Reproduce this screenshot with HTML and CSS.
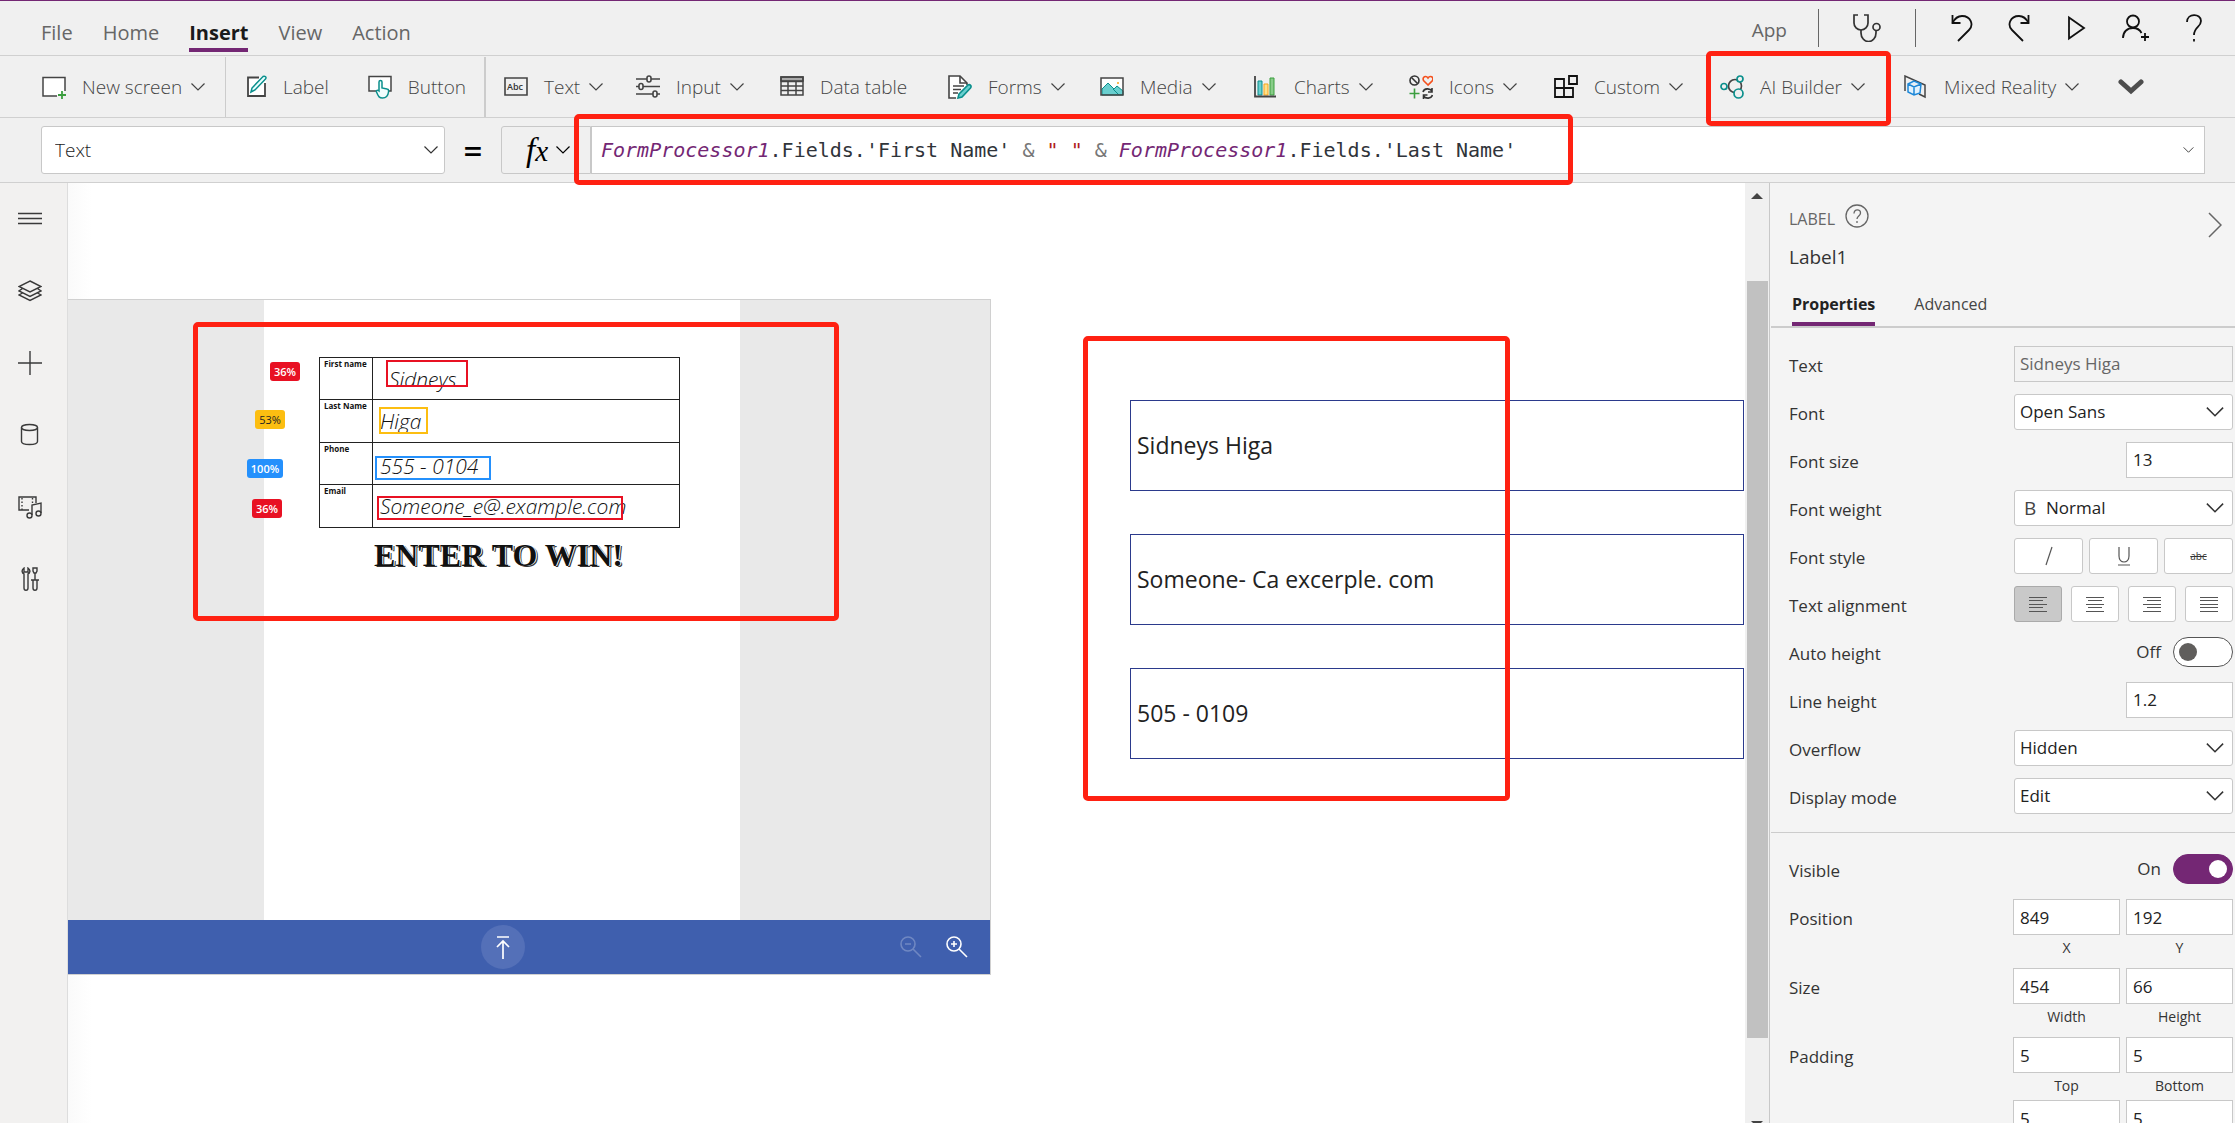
FILE: index.html
```html
<!DOCTYPE html>
<html lang="en">
<head>
<meta charset="utf-8">
<title>Power Apps Studio</title>
<link rel="stylesheet" href="styles.css">
</head>
<body>
<svg class="defs" aria-hidden="true">
  <symbol id="down" viewBox="0 0 14 8"><path d="M.5.5 7 7 13.5.5" fill="none" stroke="currentColor" stroke-width="1.2"/></symbol>
</svg>
<div class="app">
  <header class="menubar">
    <nav class="menus">
      <a href="#">File</a>
      <a href="#">Home</a>
      <a href="#" class="current">Insert</a>
      <a href="#">View</a>
      <a href="#">Action</a>
    </nav>
    <div class="actions">
      <a href="#" class="app-link">App</a>
      <button class="checker" aria-label="App checker"><svg width="30" height="28" viewBox="0 0 30 28" fill="none" stroke="#333" stroke-width="1.7"><path d="M6 1H2v8a7 7 0 0 0 14 0V1h-4"/><path d="M9 16v3a7 8 0 0 0 15 0v-3"/><circle cx="24.500" cy="13" r="3.500"/></svg></button>
      <button aria-label="Undo"><svg width="22" height="28" viewBox="0 0 22 28" fill="none" stroke="#111" stroke-width="1.800"><path d="M1.500 1v8h8"/><path d="M1.500 9C4 4 7 2 11 2c9 0 12 9 7 14L7 27"/></svg></button>
      <button aria-label="Redo"><svg width="22" height="28" viewBox="0 0 22 28" fill="none" stroke="#111" stroke-width="1.800"><path d="M20.500 1v8h-8"/><path d="M20.500 9C18 4 15 2 11 2 2 2-1 11 4 16l11 11"/></svg></button>
      <button aria-label="Preview the app"><svg width="22" height="28" viewBox="0 0 22 28" fill="none" stroke="#111" stroke-width="1.800"><path d="M4 3.500v21L19 14z"/></svg></button>
      <button aria-label="Share"><svg width="28" height="28" viewBox="0 0 28 28" fill="none" stroke="#111" stroke-width="1.800"><circle cx="11" cy="7.500" r="6"/><path d="M1 24c0-6 4-10 10-10 4 0 7 2 8.500 5M23 19v8M19 23h8"/></svg></button>
      <button aria-label="Help"><svg width="18" height="28" viewBox="0 0 18 28" fill="none" stroke="#111" stroke-width="1.800"><path d="M2 8c0-9 14-9 14-1 0 6-7 6-7 14M9 25v2.500"/></svg></button>
    </div>
  </header>

  <div class="toolbar">
    <div class="group screen">
      <button class="tool"><svg width="24" height="24" viewBox="0 0 24 24"><path d="M15 21H1V2.500h22V16" fill="#fff" stroke="#444" stroke-width="1.500"/><path d="M20 16v8M16 20h8" stroke="#3b9e3f" stroke-width="1.800"/></svg><span>New screen</span><svg class="chev"><use href="#down"/></svg></button>
    </div>
    <div class="group basic">
      <button class="tool"><svg width="20" height="24" viewBox="0 0 20 24"><path d="M1 2.500h18V21H1z" fill="#fff"/><path d="M12 2.500H1V21h17V8" fill="none" stroke="#444" stroke-width="1.800"/><path d="M4 17l1-4L16 1.500c2-1 4 1 2.500 2.500L8 15z" fill="#e8ffff" stroke="#0a8f8c" stroke-width="1.500"/></svg><span>Label</span></button>
      <button class="tool"><svg width="24" height="24" viewBox="0 0 24 24"><path d="M1 1.500h22V16H1z" fill="#fff" stroke="#444" stroke-width="1.500"/><path d="M11 16V7c0-2 3-2 3 0v6l5 1c1 0 2 1 1.500 3-.5 4-2 6-6 6-3 0-4-1-6-6-.5-2 1-2 2.500-1z" fill="#f0fdfd" stroke="#0a8f8c" stroke-width="1.500"/></svg><span>Button</span></button>
    </div>
    <div class="group wide">
      <button class="tool"><svg width="24" height="24" viewBox="0 0 24 24"><path d="M1 3h22v17H1z" fill="none" stroke="#444" stroke-width="1.600"/><text x="3" y="15" class="abc">Abc</text></svg><span>Text</span><svg class="chev"><use href="#down"/></svg></button>
      <button class="tool"><svg width="24" height="24" viewBox="0 0 24 24" stroke="#444" stroke-width="1.600" fill="#f0f0f0"><path d="M0 4h24M0 11.500h24M0 19h24"/><rect x="11" y="1" width="4" height="6" rx="2"/><rect x="3" y="8.500" width="4" height="6" rx="2"/><rect x="17" y="16" width="4" height="6" rx="2"/></svg><span>Input</span><svg class="chev"><use href="#down"/></svg></button>
      <button class="tool"><svg width="24" height="24" viewBox="0 0 24 24" fill="none" stroke="#444" stroke-width="1.500"><path d="M1 2h22v4H1z" fill="#aaa"/><path d="M1 2h22v18H1zM1 6.500h22M1 11h22M1 15.500h22M8 7v13M16 7v13"/></svg><span>Data table</span></button>
      <button class="tool"><svg width="24" height="24" viewBox="0 0 24 24" fill="none" stroke="#444" stroke-width="1.600"><path d="M8 23H1V1h11l7 7v2" fill="#fff"/><path d="M12 1v7h7M5 11h11M5 14.500h8M5 18h5"/><path d="M11 19 20 10c2-1 4 1 2.500 3L14 22l-4 1z" fill="#69cfcf" stroke="#0a8f8c"/></svg><span>Forms</span><svg class="chev"><use href="#down"/></svg></button>
      <button class="tool"><svg width="24" height="24" viewBox="0 0 24 24"><path d="M1 3h22v17H1z" fill="#fff"/><path d="M2 14 8 8l6 6 3-3 6 5v4H2z" fill="#69cfcf" stroke="#0a8f8c"/><path d="m13 14 6 6" stroke="#0a8f8c"/><circle cx="18" cy="8" r="1" fill="#f8a51b"/><path d="M1 3h22v17H1z" fill="none" stroke="#444" stroke-width="1.500"/></svg><span>Media</span><svg class="chev"><use href="#down"/></svg></button>
      <button class="tool"><svg width="24" height="24" viewBox="0 0 24 24"><path d="M4 6h4v14H4z" fill="#69cfcf" stroke="#0a8f8c"/><path d="M10 9h4v11h-4z" fill="#fde08a" stroke="#f8a51b"/><path d="M16 3h4v17h-4z" fill="#88cc88" stroke="#3b9e3f"/><path d="M1 1v20.500h21" fill="none" stroke="#444" stroke-width="1.800"/></svg><span>Charts</span><svg class="chev"><use href="#down"/></svg></button>
      <button class="tool"><svg width="24" height="24" viewBox="0 0 24 24" fill="none" stroke-width="1.600"><circle cx="5.500" cy="5.500" r="4.500" stroke="#333"/><path d="m2.500 2.500 6 6" stroke="#333"/><path d="M19 10 14.500 5.500C13 2 17 0 19 3c2-3 6-1 4.500 2.500z" stroke="#f4511e"/><path d="M5.500 13.500v10M.5 18.500h10" stroke="#3b9e3f"/><path d="M14 17c1-4 7-4 9-1M23 13v4h-4M23.500 20c-1 4-7 4-9 1M14.500 24v-4h4" stroke="#333"/></svg><span>Icons</span><svg class="chev"><use href="#down"/></svg></button>
      <button class="tool"><svg width="24" height="24" viewBox="0 0 24 24" fill="none" stroke="#111" stroke-width="1.800"><path d="M1 4h9v18H1zM1 13h18v9H1zM15 1h8v8h-8z"/></svg><span>Custom</span><svg class="chev"><use href="#down"/></svg></button>
      <button class="tool marked"><svg width="24" height="24" viewBox="0 0 24 24" fill="#f0f0f0" stroke-width="1.700" stroke="#0a8f8c"><circle cx="15" cy="11" r="6.500" stroke="#444"/><circle cx="4" cy="11.500" r="3"/><circle cx="20" cy="4" r="3"/><circle cx="18.500" cy="18.500" r="4.500"/></svg><span>AI Builder</span><svg class="chev"><use href="#down"/></svg></button>
      <button class="tool"><svg width="24" height="24" viewBox="0 0 24 24" fill="none" stroke-width="1.500"><path d="M1 16V1l20 9v12l-6-3" stroke="#444"/><path d="M4 9l6-3 7 3-1 9-6 2-6-3zM4 9l6 3 7-3M10 12v8" fill="#e3f2fd" stroke="#1e88d8"/></svg><span>Mixed Reality</span><svg class="chev"><use href="#down"/></svg></button>
      <button class="tool" aria-label="More controls"><svg width="26" height="24" viewBox="0 0 26 24"><path d="m3 7 10 9L23 7" fill="none" stroke="#4d4d4d" stroke-width="5" stroke-linecap="round"/></svg></button>
    </div>
  </div>

  <div class="formula-row">
    <div class="picker property"><select aria-label="Property"><option>Text</option></select><svg class="chev"><use href="#down"/></svg></div>
    <span class="equals">=</span>
    <button class="fx" aria-label="Functions"><i><b>f</b>x</i><svg class="chev"><use href="#down"/></svg></button>
    <div class="formula">
      <div class="code" role="textbox" contenteditable="true" aria-label="Formula" spellcheck="false"><i>FormProcessor1</i>.Fields.'First Name' <u>&amp;</u> <s>" "</s> <u>&amp;</u> <i>FormProcessor1</i>.Fields.'Last Name'</div>
      <svg class="chev"><use href="#down"/></svg>
    </div>
  </div>

  <main class="workspace">
    <nav class="rail">
      <button aria-label="Menu"><svg width="24" height="24" viewBox="0 0 24 24"><path d="M0 6.500h24M0 11.500h24M0 16.500h24"/></svg></button>
      <button aria-label="Tree view"><svg width="24" height="24" viewBox="0 0 24 24"><path d="M12 2 23 7.500 12 13 1 7.500zM4.500 9.500 1 12l11 5.500L23 12l-3.500-2.500M4.500 14 1 16l11 5.500L23 16l-3.500-2"/></svg></button>
      <button aria-label="Insert"><svg width="24" height="24" viewBox="0 0 24 24"><path d="M12 0v24M0 12h24"/></svg></button>
      <button aria-label="Data"><svg width="24" height="24" viewBox="0 0 24 24"><ellipse cx="11.500" cy="4.500" rx="8" ry="3"/><path d="M3.500 4.500v14c0 4 16 4 16 0v-14"/></svg></button>
      <button aria-label="Media"><svg width="24" height="24" viewBox="0 0 24 24"><path d="M11 15H1V2h17v6M14 20V10l9-2v10"/><path d="M4 3v12M14.500 3v6" stroke-dasharray="1.500 2"/><circle cx="11.500" cy="20.500" r="2.500"/><circle cx="20.500" cy="18.500" r="2.500"/></svg></button>
      <button aria-label="Advanced tools"><svg width="24" height="24" viewBox="0 0 24 24"><path d="M6 1C3 3 4 6 6 7v14c0 3 4 3 4 0V7c2-1 3-4 0-6v4H6zM15 1h4v3l-1 2h-2l-1-2zM17 6v7M13 13h8M15 13v8c0 3 4 3 4 0v-8"/></svg></button>
    </nav>

    <section class="canvas">
      <div class="processor">
        <div class="page">
          <table class="form">
            <tr><th scope="row">First name</th><td class="ink">Sidneys</td></tr>
            <tr><th scope="row">Last Name</th><td class="ink">Higa</td></tr>
            <tr><th scope="row">Phone</th><td class="ink">555 - 0104</td></tr>
            <tr><th scope="row">Email</th><td class="ink">Someone_e@.example.com</td></tr>
          </table>
          <div class="slogan">ENTER TO WIN!</div>
          <span class="hit low first"></span>
          <span class="hit mid last"></span>
          <span class="hit high phone"></span>
          <span class="hit low email"></span>
          <span class="score low first">36%</span>
          <span class="score mid last">53%</span>
          <span class="score high phone">100%</span>
          <span class="score low email">36%</span>
        </div>
        <div class="viewbar">
          <button class="fit" aria-label="Upload"><svg width="14" height="24" viewBox="0 0 14 24" fill="none" stroke="#fff" stroke-width="1.700"><path d="M1 2h12M7 6v18M1 12l6-6 6 6"/></svg></button>
          <button class="zoom" disabled aria-label="Zoom out"><svg width="22" height="22" viewBox="0 0 22 22"><circle cx="8" cy="8" r="7"/><path d="M5 8h6M13 13l8 8"/></svg></button>
          <button class="zoom" aria-label="Zoom in"><svg width="22" height="22" viewBox="0 0 22 22"><circle cx="8" cy="8" r="7"/><path d="M5 8h6M8 5v6M13 13l8 8"/></svg></button>
        </div>
      </div>
      <div class="outputs">
        <div class="output">Sidneys Higa</div>
        <div class="output">Someone- Ca excerple. com</div>
        <div class="output">505 - 0109</div>
      </div>
      <div class="mark scan"></div>
      <div class="mark results"></div>
    </section>

    <div class="scroll" aria-hidden="true">
      <svg width="12" height="6" viewBox="0 0 12 6"><path d="M0 6 6 0l6 6z" fill="#444"/></svg>
      <div class="thumb"></div>
      <svg class="end" width="12" height="6" viewBox="0 0 12 6"><path d="M0 0h12L6 6z" fill="#444"/></svg>
    </div>

    <aside class="panel">
      <div class="heading">
        <div>
          <div class="kind">LABEL <button aria-label="About labels"><svg width="24" height="24" viewBox="0 0 24 24" fill="none" stroke="#666" stroke-width="1.300"><circle cx="12" cy="12" r="11"/><path d="M9 9.500c0-5 6.500-4.500 6.500-.5 0 3-3.500 3-3.500 6M12 17v2"/></svg></button></div>
          <div class="name">Label1</div>
        </div>
        <button aria-label="Collapse"><svg width="14" height="26" viewBox="0 0 14 26" fill="none" stroke="#666" stroke-width="1.500"><path d="M1 1l12 12L1 25"/></svg></button>
      </div>
      <div class="tabs" role="tablist">
        <button role="tab" aria-selected="true">Properties</button>
        <button role="tab" aria-selected="false">Advanced</button>
      </div>
      <div class="props">
        <div class="row"><label for="p-text">Text</label><input id="p-text" class="full" value="Sidneys Higa" disabled></div>
        <div class="row"><label for="p-font">Font</label><div class="picker"><select id="p-font"><option>Open Sans</option></select><svg class="chev"><use href="#down"/></svg></div></div>
        <div class="row"><label for="p-size">Font size</label><input id="p-size" value="13"></div>
        <div class="row"><label for="p-weight">Font weight</label><div class="picker"><span class="bold">B</span><select id="p-weight"><option>Normal</option></select><svg class="chev"><use href="#down"/></svg></div></div>
        <div class="row"><span>Font style</span><div class="buttons three">
          <button aria-label="Italic"><svg width="20" height="20" viewBox="0 0 20 20"><path d="m7 19 6-18"/></svg></button>
          <button aria-label="Underline"><svg width="20" height="20" viewBox="0 0 20 20"><path d="M5 1v9c0 8 10 8 10 0V1M4 19h12"/></svg></button>
          <button aria-label="Strikethrough" class="strike">abc</button></div></div>
        <div class="row"><span>Text alignment</span><div class="buttons four">
          <button aria-label="Left" class="on"><svg width="20" height="20" viewBox="0 0 20 20"><path d="M1 3.500h18M1 6.500h14M1 10.500h18M1 13.500h14M1 17.500h18"/></svg></button>
          <button aria-label="Center"><svg width="20" height="20" viewBox="0 0 20 20"><path d="M1 3.500h18M3 6.500h14M1 10.500h18M3 13.500h14M1 17.500h18"/></svg></button>
          <button aria-label="Right"><svg width="20" height="20" viewBox="0 0 20 20"><path d="M1 3.500h18M5 6.500h14M1 10.500h18M5 13.500h14M1 17.500h18"/></svg></button>
          <button aria-label="Justify"><svg width="20" height="20" viewBox="0 0 20 20"><path d="M1 3.500h18M1 6.500h18M1 10.500h18M1 13.500h18M1 17.500h18"/></svg></button></div></div>
        <div class="row"><label for="p-auto">Auto height</label><div class="toggle"><span>Off</span><input type="checkbox" id="p-auto"></div></div>
        <div class="row"><label for="p-line">Line height</label><input id="p-line" value="1.2"></div>
        <div class="row"><label for="p-over">Overflow</label><div class="picker"><select id="p-over"><option>Hidden</option></select><svg class="chev"><use href="#down"/></svg></div></div>
        <div class="row"><label for="p-mode">Display mode</label><div class="picker"><select id="p-mode"><option>Edit</option></select><svg class="chev"><use href="#down"/></svg></div></div>
      </div>
      <div class="props layout">
        <div class="row"><label for="p-vis">Visible</label><div class="toggle"><span>On</span><input type="checkbox" id="p-vis" checked></div></div>
        <div class="row pair"><span>Position</span><div><input id="p-x" value="849"><label for="p-x">X</label></div><div><input id="p-y" value="192"><label for="p-y">Y</label></div></div>
        <div class="row pair"><span>Size</span><div><input id="p-w" value="454"><label for="p-w">Width</label></div><div><input id="p-h" value="66"><label for="p-h">Height</label></div></div>
        <div class="row pair tight"><span>Padding</span><div><input id="p-t" value="5"><label for="p-t">Top</label></div><div><input id="p-b" value="5"><label for="p-b">Bottom</label></div></div>
        <div class="row pair"><span></span><div><input aria-label="Left" value="5"></div><div><input aria-label="Right" value="5"></div></div>
      </div>
    </aside>
  </main>
</div>
</body>
</html>
```

FILE: styles.css
```css
*, *::before, *::after { box-sizing: border-box; }

body {
  margin: 0;
  font-family: "Open Sans", "Noto Sans", sans-serif;
  font-size: 17px;
  color: #333;
}

button, input, select { font: inherit; color: inherit; }
button { border: 0; padding: 0; background: none; display: flex; align-items: center; justify-content: center; }
a { color: inherit; text-decoration: none; }
svg { display: block; flex: none; }
.defs { position: absolute; width: 0; height: 0; }
.chev { width: 14px; height: 8px; }

.app {
  height: 100vh;
  display: flex;
  flex-direction: column;
  overflow: hidden;
  background: #f0f0f0;
}

/* menu bar */
.menubar {
  height: 56px;
  flex: none;
  display: flex;
  justify-content: space-between;
  border-top: 1px solid #742774;
  border-bottom: 1px solid #d0d0d0;
  padding: 0 32px 0 41px;
}
.menus { display: flex; gap: 30px; font-size: 20px; color: #666; padding-top: 18px; }
.menus a { height: 33px; line-height: 28px; }
.menus .current { font-weight: 700; color: #1a1a1a; border-bottom: 4px solid #742774; }
.actions { display: flex; align-items: flex-start; gap: 35px; padding-top: 8px; }
.actions button { height: 38px; }
.app-link { font-size: 19px; color: #666; line-height: 42px; margin-right: -4px; }
.checker { padding: 0 33px; border: solid #666; border-width: 0 1px; }

/* insert toolbar */
.toolbar {
  height: 62px;
  flex: none;
  display: flex;
  padding-top: 1px;
  border-bottom: 1px solid #d0d0d0;
}
.group { display: flex; align-items: center; }
.group.screen { width: 226px; padding-left: 42px; border-right: 1px solid #ccc; }
.group.basic { width: 260px; padding-left: 21px; gap: 39px; border-right: 2px solid #ccc; }
.group.wide {
  flex: 1;
  padding-left: 18px;
  display: grid;
  grid-template-columns: 132px 144px 168px 152px 154px 155px 145px 166px 184px 214px auto;
  justify-content: start;
}
.tool { height: 50px; justify-content: flex-start; gap: 16px; font-size: 19px; font-weight: 300; color: #444; white-space: nowrap; position: relative; }
.tool .chev { margin-left: -7px; }
.abc { font-size: 9px; font-weight: 600; fill: #333; }
.marked::after {
  content: "";
  position: absolute;
  inset: -11px 13px -14px -14px;
  border: 5px solid #ff2112;
  border-radius: 5px;
}

/* formula bar */
.formula-row {
  height: 65px;
  flex: none;
  display: flex;
  align-items: center;
  padding: 0 30px 0 41px;
  border-bottom: 1px solid #d0d0d0;
}
.picker {
  display: flex;
  align-items: center;
  height: 36px;
  width: 219px;
  padding: 0 8px 0 5px;
  border: 1px solid #c8c8c8;
  border-radius: 3px;
  background: #fff;
}
.picker select { flex: 1; min-width: 0; appearance: none; border: 0; background: none; padding: 0; color: #222; }
.picker .chev { width: 18px; height: 10px; }
.picker.property { width: 404px; height: 48px; padding: 0 6px 0 13px; }
.property select { font-size: 19px; font-weight: 300; }
.property .chev { width: 14px; height: 8px; }
.equals { width: 56px; text-align: center; font-size: 33px; font-weight: 600; color: #000; }
.fx { width: 90px; height: 48px; gap: 8px; border: 1px solid #c8c8c8; border-radius: 3px 0 0 3px; padding-left: 4px; font-family: "Liberation Serif", serif; font-size: 29px; color: #000; }
.fx b { font-weight: 400; font-size: 33px; }
.formula {
  flex: 1;
  height: 48px;
  display: flex;
  align-items: center;
  justify-content: space-between;
  padding: 0 10px 0 9px;
  border: 1px solid #c8c8c8;
  background: #fff;
  position: relative;
}
.formula::after {
  content: "";
  position: absolute;
  left: -18px;
  top: -13px;
  width: 999px;
  height: 71px;
  border: 5px solid #ff2112;
  border-radius: 5px;
  pointer-events: none;
  z-index: 1;
}
.formula .chev { width: 11px; height: 6px; }
.code { font-family: "DejaVu Sans Mono", monospace; font-size: 20px; color: #30343a; white-space: pre; }
.code i { color: #742774; }
.code u { color: #777; text-decoration: none; }
.code s { color: #b02020; text-decoration: none; }

/* work area */
.workspace { flex: 1; min-height: 0; display: flex; }
.rail {
  width: 68px;
  flex: none;
  background: #f2f1f0;
  border-right: 1px solid #ddd;
  padding: 24px 0 0 18px;
  display: flex;
  flex-direction: column;
  gap: 48px;
}
.rail button { width: 24px; height: 24px; }
.rail svg { fill: none; stroke: #3a3a3a; stroke-width: 1.4; }

.canvas { flex: 1; position: relative; overflow: hidden; background: linear-gradient(90deg, #fafafa, #fff 24px); }
.processor {
  position: absolute;
  left: 0;
  top: 116px;
  width: 923px;
  border: 1px solid #d0d0d0;
  border-left: 0;
  background: #e9e9e9;
}
.page { width: 476px; height: 620px; margin-left: 196px; padding: 57px 0 0 55px; background: #fff; position: relative; }
.form { border-collapse: collapse; width: 361px; table-layout: fixed; }
.form tr { height: 42px; }
.form tr:nth-child(even) { height: 43px; }
.form th, .form td { border: 1px solid #222; }
.form th { width: 53px; padding: 2px 0 0 4px; vertical-align: top; text-align: left; font-size: 8px; line-height: 8px; font-weight: 700; color: #111; white-space: nowrap; }
.ink { padding: 0 0 0 7px; font-style: italic; font-weight: 300; font-size: 21px; line-height: 24px; color: #111; }
tr:first-child .ink { padding-left: 16px; }
.form tr:nth-child(3) .ink { padding-top: 5px; }
.slogan {
  padding: 7px 0 0 55px;
  font-family: "Liberation Serif", serif;
  font-size: 32px;
  line-height: 40px;
  font-weight: 700;
  color: #111;
  text-shadow: 1px 0 #fff, 2px 1px #333;
  white-space: nowrap;
}
.hit, .score { position: absolute; border: 2px solid; }
.score { border: 0; border-radius: 3px; height: 19px; line-height: 19px; width: 30px; text-align: center; font-size: 11px; font-weight: 600; color: #fff; }
.hit.low { border-color: #e81123; }
.hit.mid { border-color: #fcbe11; }
.hit.high { border-color: #2490fc; }
.score.low { background: #e81123; }
.score.mid { background: #fcbe11; color: #222; font-weight: 400; }
.score.high { background: #2490fc; width: 36px; }
.hit.first { left: 122px; top: 60px; width: 82px; height: 27px; }
.hit.last { left: 115px; top: 107px; width: 49px; height: 27px; }
.hit.phone { left: 111px; top: 156px; width: 116px; height: 24px; }
.hit.email { left: 113px; top: 196px; width: 246px; height: 24px; }
.score.first { left: 6px; top: 62px; }
.score.last { left: -9px; top: 110px; }
.score.phone { left: -17px; top: 159px; }
.score.email { left: -12px; top: 199px; }

.viewbar {
  height: 54px;
  padding-right: 22px;
  background: #3f5fae;
  display: flex;
  align-items: center;
  gap: 24px;
}
.fit { width: 44px; height: 44px; border-radius: 50%; background: #5470b8; margin: 0 auto 0 413px; }
.zoom svg { fill: none; stroke: #fff; stroke-width: 1.6; }
.zoom:disabled { opacity: .25; }

.outputs { position: absolute; left: 1062px; right: 1px; top: 217px; display: flex; flex-direction: column; gap: 43px; }
.output { height: 91px; padding-left: 6px; border: 1px solid #2b3a8c; line-height: 89px; font-size: 23px; color: #222; background: #fff; }
.mark { position: absolute; border: 5px solid #ff2112; border-radius: 5px; }
.mark.scan { left: 125px; top: 139px; width: 646px; height: 299px; }
.mark.results { left: 1015px; top: 153px; width: 427px; height: 465px; }

.scroll {
  width: 25px;
  flex: none;
  display: flex;
  flex-direction: column;
  align-items: center;
  padding-top: 10px;
  border-right: 1px solid #c8c8c8;
}
.thumb { width: 21px; flex: none; height: calc(81% + 4px); margin: 82px 0 auto; background: #c1c1c1; }
.scroll .end { margin-bottom: -4px; }

/* properties panel */
.panel { width: 465px; flex: none; background: #f4f4f4; overflow: hidden; padding-left: 1px; }
.heading { display: flex; justify-content: space-between; align-items: flex-start; padding: 21px 13px 0 18px; }
.heading > button { margin-top: 8px; }
.kind { display: flex; gap: 10px; font-size: 16px; line-height: 30px; color: #666; }
.kind button { height: 24px; }
.name { font-size: 19px; line-height: 28px; margin-top: 9px; }
.tabs { display: flex; gap: 39px; height: 57px; padding-left: 21px; border-bottom: 2px solid #ccc; font-size: 16px; }
.tabs button { height: 55px; padding-top: 14px; border-bottom: 4px solid transparent; color: #444; }
.tabs [aria-selected="true"] { font-weight: 700; color: #222; border-color: #742774; }
.props { display: flex; flex-direction: column; gap: 12px; padding: 18px 2px 18px 18px; }
.row { display: flex; justify-content: space-between; align-items: flex-start; height: 36px; line-height: 36px; }
.row > label, .row > span { line-height: 40px; }
.row input:not([type]) { width: 107px; height: 36px; padding: 0 0 0 6px; border: 1px solid #c8c8c8; border-radius: 0; background: #fff; color: #222; }
.row input.full { width: 219px; padding-left: 5px; }
.row input:disabled:not([type]) { background: #f3f3f3; color: #666; }
.bold { width: 26px; padding-left: 4px; font-size: 19px; color: #444; }
.buttons { width: 219px; display: grid; }
.three { grid-template-columns: repeat(3, 1fr); gap: 6px; }
.four { grid-template-columns: repeat(4, 1fr); gap: 9px; }
.buttons button { height: 36px; border: 1px solid #c8c8c8; border-radius: 3px; background: #fff; }
.buttons .on { background: #c9c9c9; border-color: #aaa; }
.buttons svg { fill: none; stroke: #555; stroke-width: 1.2; }
.buttons .strike { font-size: 10px; text-decoration: line-through; }
.toggle { display: flex; align-items: center; gap: 12px; height: 36px; }
.toggle input { appearance: none; width: 60px; height: 30px; margin: 0; border: 1px solid #555; border-radius: 15px; background: #fff; display: flex; align-items: center; padding: 0 5px; }
.toggle input::before { content: ""; width: 18px; height: 18px; border-radius: 50%; background: #605e5c; }
.toggle input:checked { background: #742774; border-color: #742774; justify-content: flex-end; }
.toggle input:checked::before { background: #fff; }
.layout { border-top: 1px solid #ccc; }
.row.pair { height: 57px; gap: 6px; }
.row.pair.tight { height: 51px; }
.pair > span { flex: 1; }
.pair div { width: 107px; display: flex; flex-direction: column; text-align: center; font-size: 14px; line-height: 26px; }
.pair div input:not([type]) { font-size: 17px; }
```
